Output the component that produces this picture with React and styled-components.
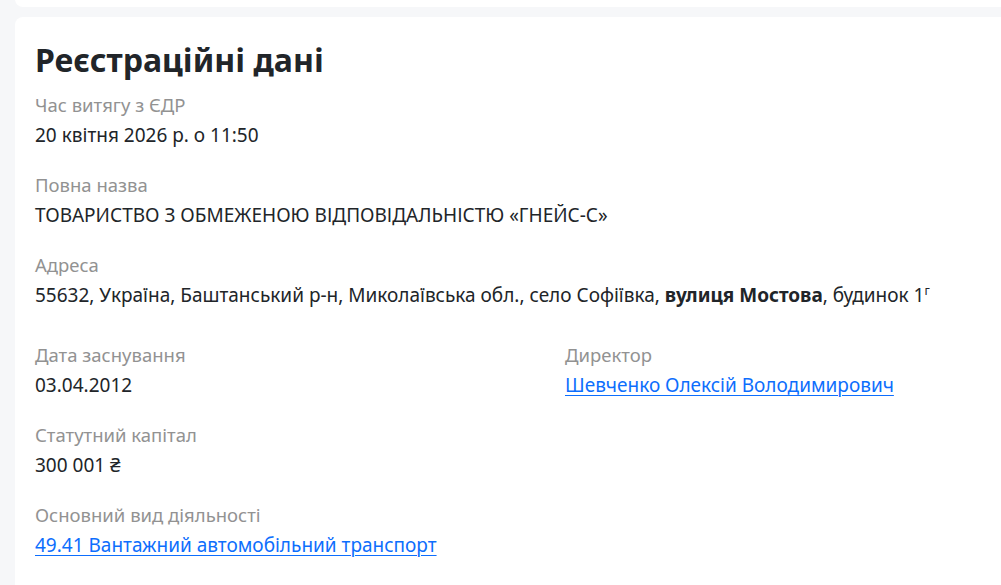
import React from "react";
import styled, { createGlobalStyle } from "styled-components";

const Global = createGlobalStyle`
  html, body { margin: 0; padding: 0; background: #f6f7f9; overflow: hidden; }
  body { font-family: "Noto Sans", "Open Sans", sans-serif; color: #212529; }
`;

const Page = styled.div`
  display: flex;
  flex-direction: column;
  gap: 10px;
  padding: 0 0 0 15px;
  margin-top: -20px;
  width: 1120px;
`;

const Card = styled.section`
  background: #fff;
  border-radius: 8px;
  padding: ${(p) => (p.$stub ? "0" : "20px 20px 48px")};
  height: ${(p) => (p.$stub ? "27px" : "auto")};
`;

const Title = styled.h2`
  margin: 0 0 7px;
  font-size: 32px;
  font-weight: 700;
  line-height: 46px;
  color: #212529;
`;

const Grid = styled.div`
  display: grid;
  grid-template-columns: 530px 1fr;
  row-gap: 20px;
`;

const Field = styled.div`
  grid-column: ${(p) => (p.$full ? "1 / -1" : "auto")};
  margin-bottom: ${(p) => (p.$extra ? "10px" : "0")};
`;

const Label = styled.div`
  font-size: 18.5px;
  line-height: 30px;
  color: #929292;
`;

const Value = styled.div`
  font-size: 19px;
  line-height: 30px;
  color: #212529;
  b { font-weight: 700; }
  sup { font-size: 12px; line-height: 0; vertical-align: 7px; }
`;

const Link = styled.a`
  color: #0d6efd;
  text-decoration: underline;
  text-decoration-thickness: 1px;
  text-underline-offset: 3px;
  cursor: pointer;
`;

export default function App() {
  return (
    <>
      <Global />
      <Page>
        <Card $stub />
        <Card>
          <Title>Реєстраційні дані</Title>
          <Grid>
            <Field $full>
              <Label>Час витягу з ЄДР</Label>
              <Value>20 квітня 2026 р. о 11:50</Value>
            </Field>
            <Field $full>
              <Label>Повна назва</Label>
              <Value>ТОВАРИСТВО З ОБМЕЖЕНОЮ ВІДПОВІДАЛЬНІСТЮ «ГНЕЙС-С»</Value>
            </Field>
            <Field $full $extra>
              <Label>Адреса</Label>
              <Value>
                55632, Україна, Баштанський р-н, Миколаївська обл., село Софіївка, <b>вулиця Мостова</b>, будинок 1<sup>г</sup>
              </Value>
            </Field>
            <Field>
              <Label>Дата заснування</Label>
              <Value>03.04.2012</Value>
            </Field>
            <Field>
              <Label>Директор</Label>
              <Value>
                <Link>Шевченко Олексій Володимирович</Link>
              </Value>
            </Field>
            <Field $full>
              <Label>Статутний капітал</Label>
              <Value>300 001 ₴</Value>
            </Field>
            <Field $full>
              <Label>Основний вид діяльності</Label>
              <Value>
                <Link>49.41 Вантажний автомобільний транспорт</Link>
              </Value>
            </Field>
          </Grid>
        </Card>
      </Page>
    </>
  );
}
